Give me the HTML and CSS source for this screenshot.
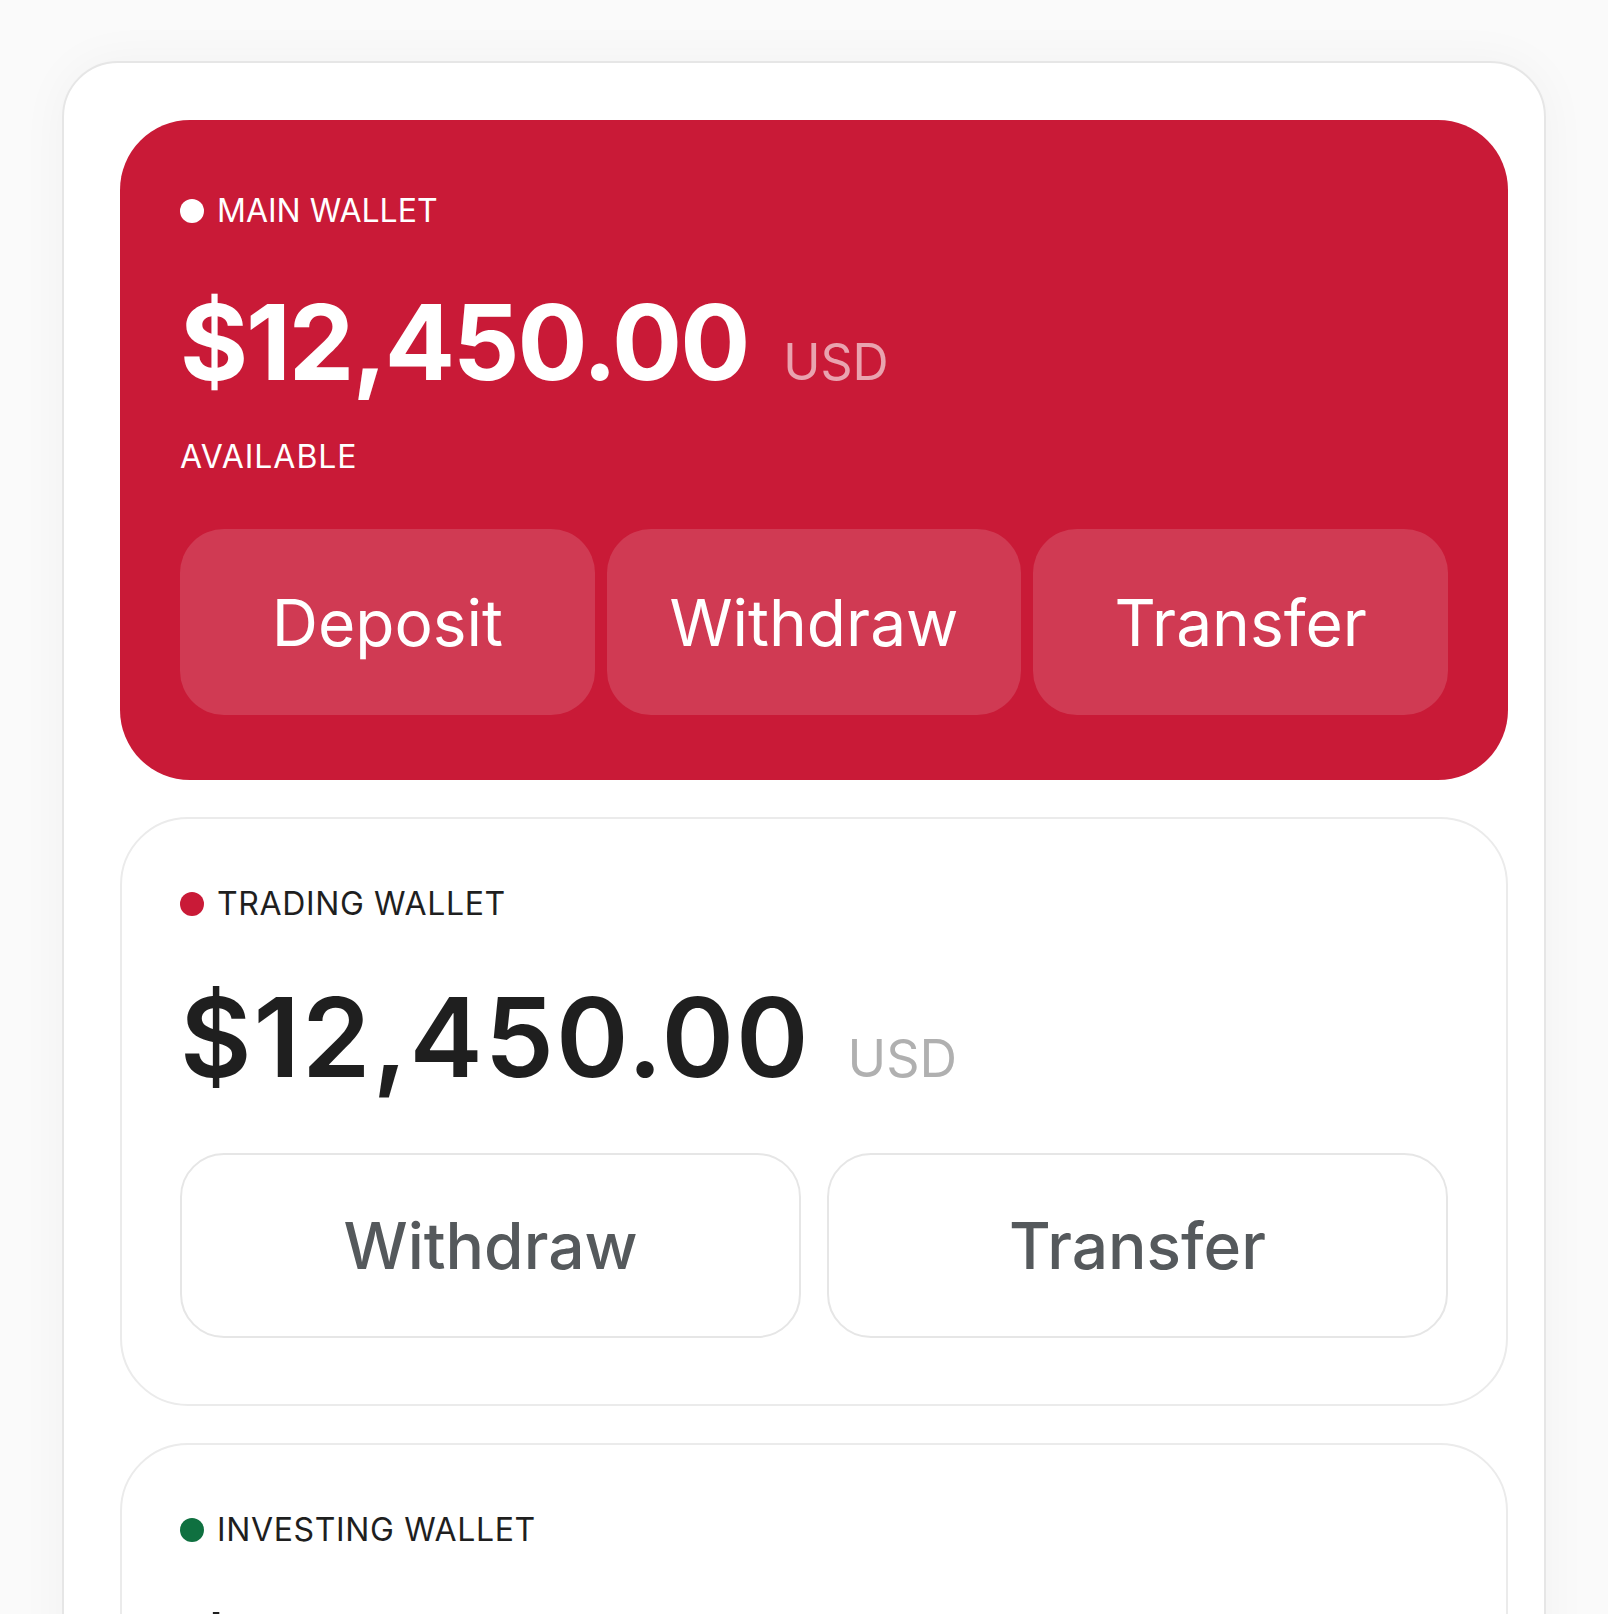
FILE: index.html
```html
<!DOCTYPE html>
<html lang="en">
<head>
    <meta charset="UTF-8">
    <meta name="viewport" content="width=device-width, initial-scale=1.0">
    <title>Wallets</title>
    <link rel="stylesheet" href="styles.css">
</head>
<body>
    <div class="shell">
        <div class="wallets">

            <section class="wallet wallet-main">
                <div class="wallet-label"><span class="dot"></span>MAIN WALLET</div>
                <div class="balance">
                    <span class="amount">$12,450.00</span>
                    <span class="currency">USD</span>
                </div>
                <div class="wallet-sub">AVAILABLE</div>
                <div class="actions actions-3">
                    <button class="btn btn-light">Deposit</button>
                    <button class="btn btn-light">Withdraw</button>
                    <button class="btn btn-light">Transfer</button>
                </div>
            </section>

            <section class="wallet wallet-plain">
                <div class="wallet-label"><span class="dot dot-red"></span>TRADING WALLET</div>
                <div class="balance">
                    <span class="amount">$12,450.00</span>
                    <span class="currency">USD</span>
                </div>
                <div class="actions actions-2">
                    <button class="btn btn-outline">Withdraw</button>
                    <button class="btn btn-outline">Transfer</button>
                </div>
            </section>

            <section class="wallet wallet-plain">
                <div class="wallet-label"><span class="dot dot-green"></span>INVESTING WALLET</div>
                <div class="balance">
                    <span class="amount">$12,450.00</span>
                    <span class="currency">USD</span>
                </div>
                <div class="actions actions-2">
                    <button class="btn btn-outline">Withdraw</button>
                    <button class="btn btn-outline">Transfer</button>
                </div>
            </section>

        </div>
    </div>
</body>
</html>
```

FILE: styles.css
```css
body {
    margin: 0;
    padding: 61px 62px 0 62px;
    background-color: #fafafa;
    font-family: Inter, "Noto Sans", sans-serif;
    height: 1553px;
    overflow: hidden;
}

.shell {
    background-color: #fff;
    border: 2px solid #e6e6e6;
    border-radius: 56px;
    padding: 57px 56px 56px 56px;
    box-shadow: 0 0 50px rgba(0,0,0,0.04);
}

.wallets {
    width: 1388px;
    display: flex;
    flex-direction: column;
    gap: 37px;
}

.wallet {
    border-radius: 70px;
    padding: 71px 60px 65px 60px;
}

.wallet-main {
    background-color: #c91a37;
    color: #fff;
}

.wallet-plain {
    background-color: #fff;
    border: 2px solid #ebebeb;
    border-radius: 68px;
    padding: 65px 58px 66px 58px;
    color: #1f1f1f;
}

.wallet-label {
    display: flex;
    align-items: center;
    gap: 13px;
    font-size: 32px;
    line-height: 40px;
}

.wallet-plain .wallet-label {
    letter-spacing: 0.02em;
}

.dot {
    width: 24px;
    height: 24px;
    border-radius: 50%;
    background-color: #fff;
}

.dot-red {
    background-color: #c91a37;
}

.dot-green {
    background-color: #0f7040;
}

.balance {
    display: flex;
    align-items: baseline;
    gap: 35px;
    margin-top: 59px;
}

.wallet-plain .balance {
    gap: 37px;
    margin-top: 58px;
}

.amount {
    font-size: 104px;
    line-height: 1;
    font-weight: 700;
    letter-spacing: -0.02em;
}

.wallet-plain .amount {
    font-size: 110px;
    font-weight: 600;
    letter-spacing: 0.018em;
}

.currency {
    font-size: 50px;
    color: rgba(255, 255, 255, 0.6);
}

.wallet-plain .currency {
    font-size: 52px;
    color: #b0b0b0;
}

.wallet-sub {
    margin-top: 43px;
    font-size: 32px;
    line-height: 40px;
    letter-spacing: 0.03em;
}

.actions {
    display: grid;
    margin-top: 52px;
}

.actions-3 {
    grid-template-columns: 1fr 1fr 1fr;
    gap: 12px;
}

.actions-2 {
    grid-template-columns: 1fr 1fr;
    gap: 26px;
    margin-top: 61px;
}

.btn {
    font-family: Inter, "Noto Sans", sans-serif;
    font-size: 64px;
    border-radius: 44px;
    cursor: pointer;
}

.btn-light {
    height: 186px;
    border: none;
    background-color: rgba(255, 255, 255, 0.14);
    color: #fff;
}

.btn-outline {
    height: 185px;
    border: 2px solid #e6e6e6;
    background-color: #fff;
    color: #55595c;
    font-weight: 500;
}
```
